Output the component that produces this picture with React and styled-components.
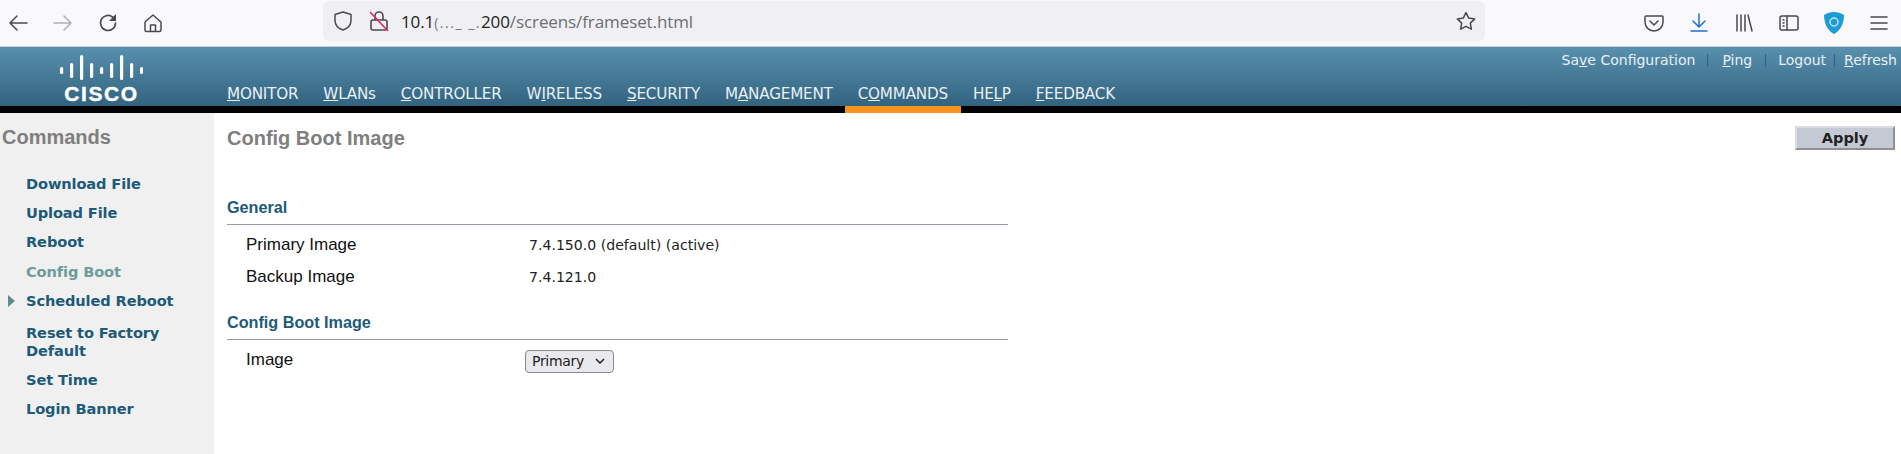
import React from "react";
import styled, { createGlobalStyle } from "styled-components";

const Global = createGlobalStyle`
  html, body { margin: 0; padding: 0; background: #fff; overflow: hidden; }
  * { box-sizing: border-box; }
`;
const Page = styled.div`
  width: 1901px; height: 454px; display: flex; flex-direction: column; overflow: hidden;
`;
const Toolbar = styled.div`
  height: 47px; flex: none; background: #f9f9fb; border-bottom: 1px solid #c8ccd2;
  display: grid; grid-template-columns: 323px 1162px 1fr; align-items: center;
`;
const NavIcons = styled.div`
  display: flex; align-items: center; padding-left: 5px; gap: 19px;
`;
const IconSlot = styled.span`
  width: 26px; height: 26px; display: flex; align-items: center; justify-content: center; flex: none;
  margin-left: ${p => p.$ml ?? 0}px;
  color: ${p => p.$color || "#4a4a4f"};
`;
const UrlBar = styled.div`
  height: 40px; margin-top: -4px; background: #f0f0f4; border-radius: 6px; display: flex; align-items: center;
  padding: 0 6px 0 7px; font: 17px "Open Sans", Arial, sans-serif; color: #6d6d72;
`;
const UrlText = styled.span`
  margin-left: 9px; flex: 1; letter-spacing: -0.1px;
  b { font-weight: normal; color: #222; }
`;
const Mask = styled.span`
  color: #777; font-size: 14px; letter-spacing: 1.5px;
`;
const Tools = styled.div`
  display: flex; align-items: center; padding-left: 156px; gap: 19px;
`;
const Header = styled.div`
  height: 59px; flex: none; display: flex; background: linear-gradient(#5890ae, #32637f);
`;
const Logo = styled.div`
  width: 227px; flex: none; padding: 8px 0 0 60px; color: #fff;
  svg { display: block; }
`;
const LogoWord = styled.div`
  width: 83px; margin-top: 5px; text-align: center; font: bold 21px/18px "Liberation Sans", Arial, sans-serif; letter-spacing: 1.6px;
  -webkit-text-stroke: 0.4px #fff;
`;
const HeaderRest = styled.div`
  flex: 1; display: flex; flex-direction: column; justify-content: space-between;
`;
const TopLinks = styled.div`
  display: flex; justify-content: flex-end; align-items: center; padding: 2px 4px 0 0; height: 24px;
  font: 14px "DejaVu Sans", Verdana, sans-serif; color: #e8f0f4;
`;
const Sep = styled.span`
  width: 1px; height: 13px; background: #2f5f85; margin: 0 ${p => p.$r ?? 14}px 0 ${p => p.$l ?? 12}px;
`;
const U = styled.span` text-decoration: underline; `;
const MainNav = styled.div`
  display: flex; height: 24px; align-items: center; gap: 25px;
  font: 15.2px "DejaVu Sans", Verdana, sans-serif; color: #e8f0f4;
`;
const NavItem = styled.span` white-space: nowrap; letter-spacing: -0.2px; `;
const BlackBar = styled.div`
  height: 7px; flex: none; background: #000; padding-left: 845px;
`;
const Orange = styled.div` width: 116px; height: 7px; background: #f7941d; `;
const Body = styled.div` flex: 1; display: flex; `;
const Side = styled.aside`
  width: 214px; flex: none; background: #f0f0f0;
`;
const SideTitle = styled.div`
  font: bold 20px/30px "Liberation Sans", Arial, sans-serif; color: #7f7f7f; padding-left: 2px; height: 30px; margin: 9px 0 23px;
`;
const SideItem = styled.div`
  position: relative; padding-left: 26px; width: 190px;
  font: bold 14.6px/18px "DejaVu Sans", Verdana, sans-serif; letter-spacing: -0.12px;
  margin-bottom: ${p => p.$mb ?? 11}px;
  color: ${p => p.$active ? "#6d9c9a" : "#1d5b78"};
`;
const Arrow = styled.span`
  position: absolute; left: 8px; top: 3px; width: 0; height: 0;
  border-left: 7px solid #5f8d8c; border-top: 6px solid transparent; border-bottom: 6px solid transparent;
`;
const Main = styled.main` flex: 1; padding: 12px 6px 0 13px; `;
const TitleRow = styled.div` display: flex; justify-content: space-between; align-items: flex-start; height: 72px; `;
const Title = styled.div` font: bold 20px/26px "Liberation Sans", Arial, sans-serif; color: #7f7f7f; `;
const ApplyBtn = styled.button`
  width: 100px; height: 24px; margin-top: 1px; padding: 0; background: #c5c9d3; border: 2px solid; border-color: #d8dbe1 #8e8f96 #8e8f96 #d8dbe1;
  font: bold 14.5px "DejaVu Sans", Verdana, sans-serif; color: #222;
`;
const Section = styled.section`
  width: 781px; margin-top: ${p => p.$mt ?? 0}px;
`;
const SectionTitle = styled.div`
  font: bold 16.2px/20px "Liberation Sans", Arial, sans-serif; color: #1d5b78; border-bottom: 1px solid #9a9aa6; height: 28px;
`;
const Rows = styled.div` padding-top: 4px; `;
const Row = styled.div`
  display: grid; grid-template-columns: 283px 1fr; padding-left: 19px; align-items: center; height: 32px;
  font: 17px "Liberation Sans", Arial, sans-serif; color: #111;
`;
const Value = styled.span` font: 14.1px "DejaVu Sans", Verdana, sans-serif; color: #222; `;
const Sel = styled.div`
  width: 89px; height: 23px; margin: 2px 0 0 -4px; border: 1px solid #8a8a8f; border-radius: 4px; background: #e9e9ed; display: flex; align-items: center; justify-content: space-between; padding: 0 8px 0 6px;
  font: 14px "DejaVu Sans", Verdana, sans-serif; color: #222; letter-spacing: -0.3px;
`;

const S = ({ children, w = 24, h = 24 }) => (
  <svg width={w} height={h} viewBox="0 0 24 24" fill="none" stroke="currentColor" strokeWidth="1.5" strokeLinecap="round" strokeLinejoin="round">{children}</svg>
);

const CiscoBars = () => (
  <svg width="83" height="25" viewBox="0 0 83 25" fill="#fff">
    {[[0,12,7],[10,8,15],[20,0,25],[30,8,15],[40,12,7],[50,8,15],[60,0,25],[70,8,15],[80,12,7]].map(([x,y,h],i)=>(
      <rect key={i} x={x} y={y} width="3.2" height={h} rx="1.6"/>
    ))}
  </svg>
);

const nav = [
  { pre: "", u: "M", post: "ONITOR" }, { pre: "", u: "W", post: "LANs" }, { pre: "", u: "C", post: "ONTROLLER" },
  { pre: "W", u: "I", post: "RELESS" }, { pre: "", u: "S", post: "ECURITY" }, { pre: "M", u: "A", post: "NAGEMENT" },
  { pre: "C", u: "O", post: "MMANDS" }, { pre: "HE", u: "L", post: "P" }, { pre: "", u: "F", post: "EEDBACK" },
];
const side = ["Download File", "Upload File"];

export default function App() {
  return (
    <Page>
      <Global />
      <Toolbar>
        <NavIcons>
          <IconSlot><S><path d="M21 12H4M11 5l-7 7 7 7"/></S></IconSlot>
          <IconSlot $color="#b0b0b5"><S><path d="M3 12h17M13 5l7 7-7 7"/></S></IconSlot>
          <IconSlot>
            <svg width="24" height="24" viewBox="0 0 24 24" fill="none"><path d="M19.500 12a7.500 7.500 0 1 1-3-6" stroke="currentColor" strokeWidth="1.7" strokeLinecap="round"/><path d="M20 3v7h-7z" fill="currentColor"/></svg>
          </IconSlot>
          <IconSlot><S><path d="M4 11l8-7 8 7v8a1.5 1.5 0 0 1-1.5 1.5h-13A1.5 1.5 0 0 1 4 19zM9.5 20v-6h5v6"/></S></IconSlot>
        </NavIcons>
        <UrlBar>
          <IconSlot><S><path d="M12 3l8 2.500v6c0 5-3.500 8-8 9.500-4.500-1.500-8-4.500-8-9.500v-6z"/></S></IconSlot>
          <IconSlot $ml={10}>
            <svg width="24" height="24" viewBox="0 0 24 24" fill="none" strokeWidth="1.6"><rect x="4" y="11" width="16" height="10" rx="2" stroke="#4a4a4f"/><path d="M8 11V7a4 4 0 0 1 8 0v4" stroke="#4a4a4f"/><path d="M3 3l18 19" stroke="#e0245e"/></svg>
          </IconSlot>
          <UrlText><b>10.1</b><Mask>(..._ _.</Mask><b>200</b>/screens/frameset.html</UrlText>
          <IconSlot><S><path d="M12 3.500l2.700 5.600 6 .8-4.400 4.200 1.100 6.100L12 17.300l-5.400 2.900 1.100-6.100L3.300 9.900l6-.8z"/></S></IconSlot>
        </UrlBar>
        <Tools>
          <IconSlot><S><path d="M4 5h16a1 1 0 0 1 1 1v5a9 9 0 0 1-18 0V6a1 1 0 0 1 1-1zM8 10l4 4 4-4"/></S></IconSlot>
          <IconSlot $color="#1f6fd6"><S><path d="M12 3v13M6 10l6 6 6-6M4 20h16"/></S></IconSlot>
          <IconSlot><S><path d="M5 4v16M9 4v16M13 4v16M16 4l4 16"/></S></IconSlot>
          <IconSlot><S><rect x="3" y="5" width="18" height="14" rx="2"/><path d="M10 5v14M6 9h1M6 12h1M6 15h1"/></S></IconSlot>
          <IconSlot>
            <svg width="24" height="26" viewBox="0 0 24 26"><path d="M2 5c6-4 14-4 20 0 0 9-4 16-10 19C6 21 2 14 2 5z" fill="#1d9cd8"/><circle cx="12" cy="12" r="4" fill="none" stroke="#bfe6f6" strokeWidth="1.500"/></svg>
          </IconSlot>
          <IconSlot><S><path d="M4 6h16M4 12h16M4 18h16"/></S></IconSlot>
        </Tools>
      </Toolbar>
      <Header>
        <Logo>
          <CiscoBars />
          <LogoWord>CISCO</LogoWord>
        </Logo>
        <HeaderRest>
          <TopLinks>
            <span>Sa<U>v</U>e Configuration</span><Sep />
            <span><U>P</U>ing</span><Sep $l={13} $r={12} />
            <span>Logout</span><Sep $l={8} $r={9} />
            <span><U>R</U>efresh</span>
          </TopLinks>
          <MainNav>{nav.map((n, i) => <NavItem key={i}>{n.pre}<U>{n.u}</U>{n.post}</NavItem>)}</MainNav>
        </HeaderRest>
      </Header>
      <BlackBar><Orange /></BlackBar>
      <Body>
        <Side>
          <SideTitle>Commands</SideTitle>
          {side.map(s => <SideItem key={s}>{s}</SideItem>)}
          <SideItem $mb={12}>Reboot</SideItem>
          <SideItem $active>Config Boot</SideItem>
          <SideItem $mb={14}><Arrow />Scheduled Reboot</SideItem>
          <SideItem>Reset to Factory Default</SideItem>
          <SideItem>Set Time</SideItem>
          <SideItem>Login Banner</SideItem>
        </Side>
        <Main>
          <TitleRow><Title>Config Boot Image</Title><ApplyBtn>Apply</ApplyBtn></TitleRow>
          <Section>
            <SectionTitle>General</SectionTitle>
            <Rows>
              <Row><span>Primary Image</span><Value>7.4.150.0 (default) (active)</Value></Row>
              <Row><span>Backup Image</span><Value>7.4.121.0</Value></Row>
            </Rows>
          </Section>
          <Section $mt={19}>
            <SectionTitle>Config Boot Image</SectionTitle>
            <Rows>
              <Row><span>Image</span><Sel>Primary<svg width="10" height="6" viewBox="0 0 10 6" fill="none" stroke="#222" strokeWidth="1.500"><path d="M1 1l4 4 4-4"/></svg></Sel></Row>
            </Rows>
          </Section>
        </Main>
      </Body>
    </Page>
  );
}
